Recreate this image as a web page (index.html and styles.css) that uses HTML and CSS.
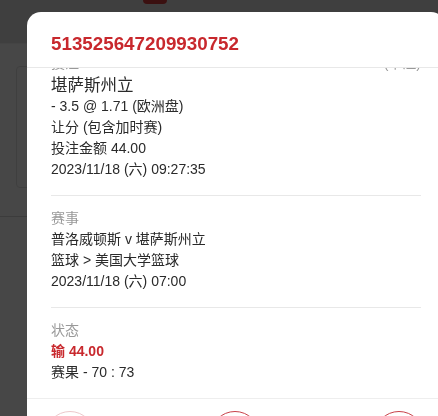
FILE: index.html
```html
<!DOCTYPE html>
<html lang="zh-CN">
<head>
    <meta charset="UTF-8">
    <meta name="viewport" content="width=device-width, initial-scale=1.0">
    <title>注单详情</title>
    <link rel="stylesheet" href="styles.css">
</head>
<body>
    <!-- Página por trás do modal -->
    <div class="page">
        <div class="page-top">
            <span class="page-tab"></span>
        </div>
        <div class="page-card"></div>
        <div class="page-row"></div>
    </div>

    <!-- Modal de detalhes -->
    <div class="overlay">
        <div class="modal">
            <div class="modal-head">
                <h1 class="bet-id">513525647209930752</h1>
            </div>
            <div class="modal-body">
                <div class="section scrolled">
                    <div class="label-row">
                        <span class="label">投注</span>
                        <span class="label">(单注)</span>
                    </div>
                    <p class="pick">堪萨斯州立</p>
                    <p>- 3.5 @ 1.71 (欧洲盘)</p>
                    <p>让分 (包含加时赛)</p>
                    <p>投注金额 44.00</p>
                    <p>2023/11/18 (六) 09:27:35</p>
                </div>
                <div class="section">
                    <div class="label-row"><span class="label">赛事</span></div>
                    <p>普洛威顿斯 v 堪萨斯州立</p>
                    <p>篮球 &gt; 美国大学篮球</p>
                    <p>2023/11/18 (六) 07:00</p>
                </div>
                <div class="section last">
                    <div class="label-row"><span class="label">状态</span></div>
                    <p class="lost">输 44.00</p>
                    <p>赛果 - 70 : 73</p>
                </div>
            </div>
            <div class="modal-foot">
                <button class="circle light"></button>
                <button class="circle"></button>
                <button class="circle"></button>
            </div>
        </div>
    </div>
</body>
</html>
```

FILE: styles.css
```css
body {
    font-family: 'Liberation Sans', Arial, 'Noto Sans CJK SC', sans-serif;
    margin: 0;
    padding: 0;
    background-color: #ffffff;
    overflow: hidden;
    height: 416px;
}
.page {
    height: 416px;
}
.page-top {
    height: 43px;
    background-color: #e2e2e2;
    border-bottom: 1px solid #f4f4f4;
    display: flex;
}
.page-tab {
    width: 24px;
    height: 4px;
    margin-left: 143px;
    background-color: #d23a3a;
    border-radius: 0 0 4px 4px;
}
.page-card {
    margin: 22px 0 0 16px;
    height: 120px;
    border: 1px solid #e2e2e2;
    border-radius: 4px;
}
.page-row {
    margin-top: 28px;
    border-top: 1px solid #d8d8d8;
}
.overlay {
    position: fixed;
    top: 0;
    left: 0;
    right: 0;
    bottom: 0;
    background-color: rgba(0, 0, 0, 0.72);
}
.modal {
    margin: 12px 0 0 27px;
    width: 418px;
    background-color: #ffffff;
    border-radius: 14px;
}
.modal-head {
    padding: 20px 24px 11px;
    border-bottom: 1px solid #e8e8e8;
}
.bet-id {
    margin: 0;
    font-size: 18.8px;
    line-height: 24px;
    font-weight: bold;
    color: #c8282d;
}
.modal-body {
    height: 330px;
    overflow: hidden;
}
.section {
    margin: 0 24px;
    padding: 12px 0 15px;
    border-bottom: 1px solid #e8e8e8;
}
.section.scrolled {
    margin-top: -27px;
}
.section.last {
    border-bottom: none;
}
.section p {
    margin: 0;
    font-size: 14px;
    line-height: 21px;
    color: #2a2a2a;
}
.label-row {
    display: flex;
    justify-content: space-between;
}
.label {
    font-size: 14px;
    line-height: 21px;
    color: #999999;
}
.section p.pick {
    font-size: 16.5px;
    line-height: 22px;
}
.section p.lost {
    color: #c8282d;
    font-weight: bold;
}
.modal-foot {
    border-top: 1px solid #eeeeee;
    padding: 12px 21px 0 18px;
    display: flex;
    justify-content: space-between;
}
.circle {
    width: 50px;
    height: 50px;
    border-radius: 50%;
    border: 1.5px solid #c8424a;
    background-color: #ffffff;
    padding: 0;
}
.circle.light {
    border-color: #ecc8cb;
}
```
